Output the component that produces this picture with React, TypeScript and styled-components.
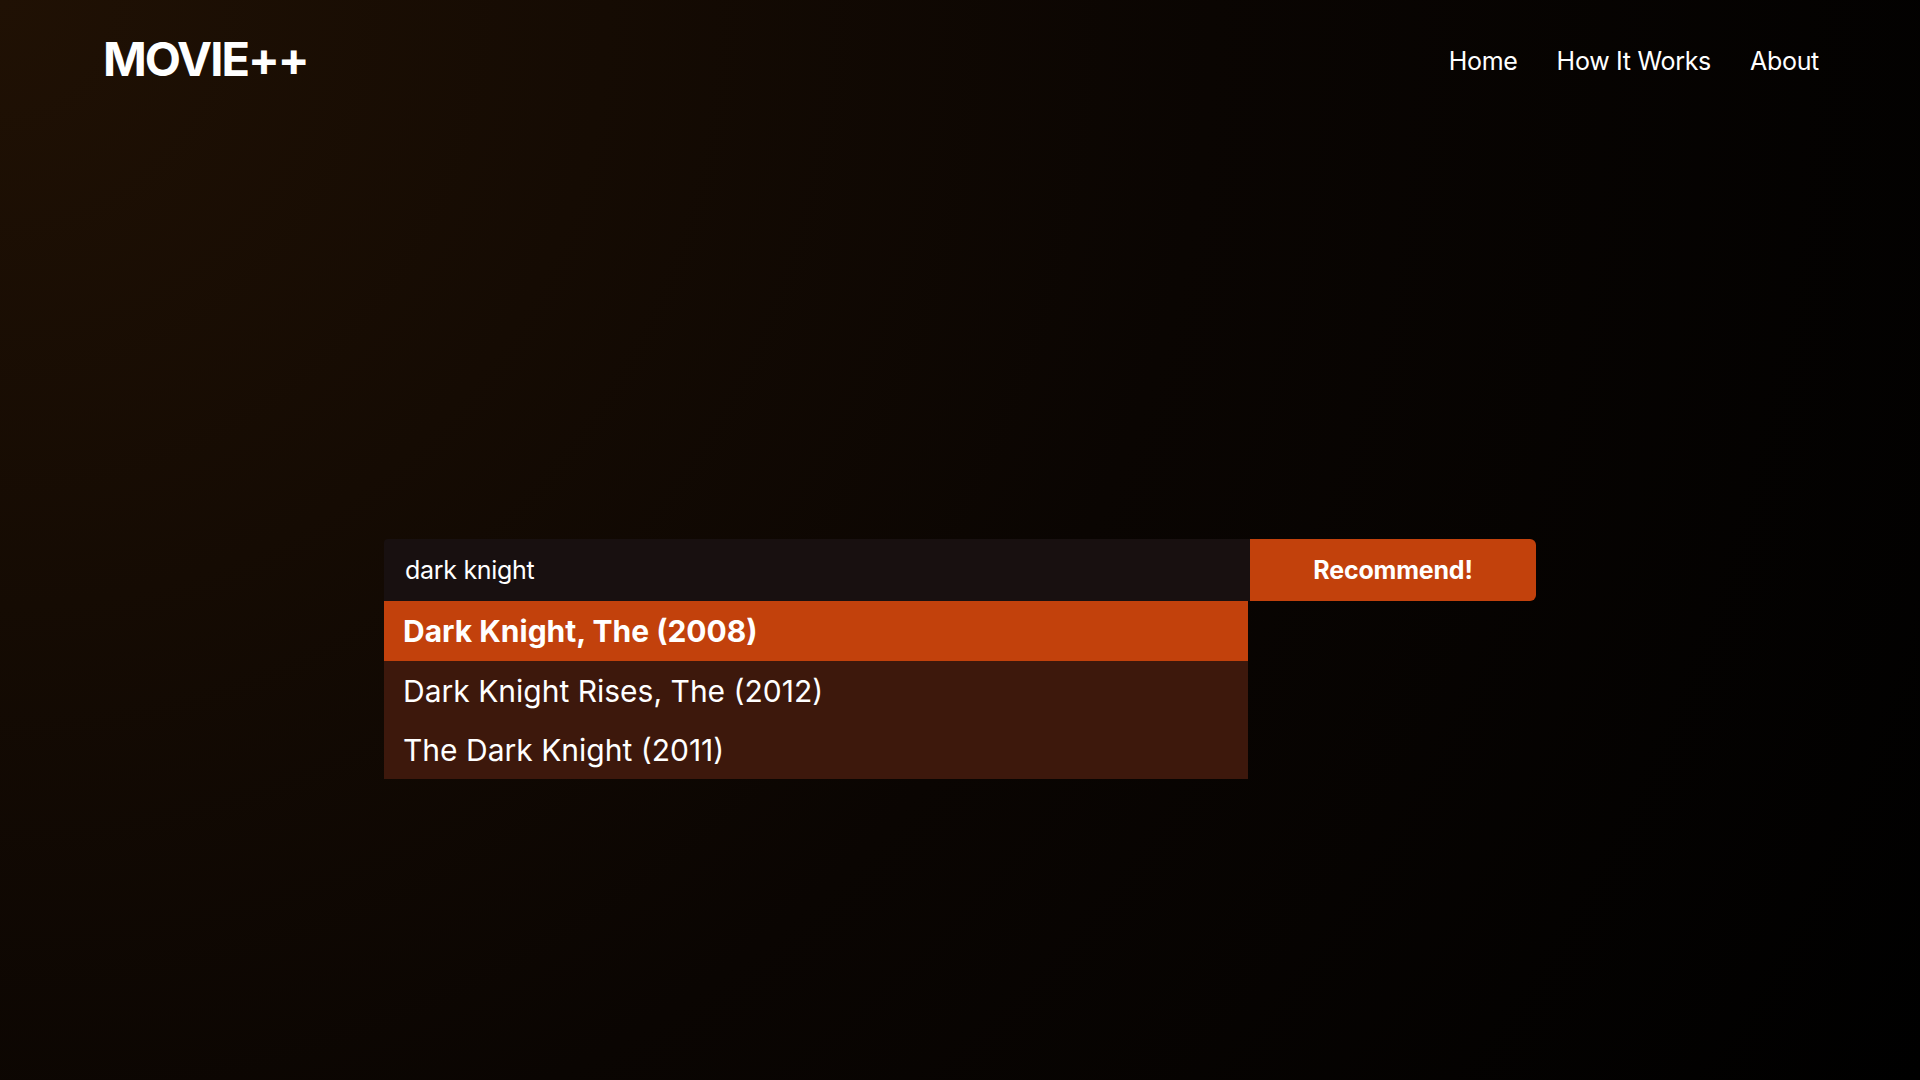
import styled, { createGlobalStyle } from "styled-components";

const GlobalStyle = createGlobalStyle`
  * {
    box-sizing: border-box;
  }
  body {
    margin: 0;
    background: #000;
    font-family: "Inter", "Noto Sans", sans-serif;
    color: #fff;
  }
`;

const results = [
  "Dark Knight, The (2008)",
  "Dark Knight Rises, The (2012)",
  "The Dark Knight (2011)",
];

const Page = styled.div`
  display: flex;
  flex-direction: column;
  min-height: 100vh;
  background: radial-gradient(circle at top left, #201104 0%, #0a0502 55%, #000 100%);
`;

const Header = styled.header`
  display: flex;
  align-items: center;
  justify-content: space-between;
  padding: 30px 101px 0 103px;
`;

const Logo = styled.a`
  font-size: 47px;
  font-weight: 700;
  letter-spacing: -2px;
  color: #fff;
  text-decoration: none;
  cursor: pointer;
`;

const Nav = styled.nav`
  display: flex;
  align-items: center;
  gap: 39px;
  padding-top: 4px;
`;

const NavLink = styled.a`
  font-size: 25px;
  font-weight: 400;
  color: #fff;
  text-decoration: none;
  letter-spacing: -0.3px;
  cursor: pointer;
`;

const Main = styled.main`
  display: flex;
  justify-content: center;
  padding-top: 452px;
`;

const SearchBar = styled.div`
  position: relative;
  display: flex;
  width: 1152px;
  height: 62px;
`;

const Input = styled.input`
  flex: 0 0 866px;
  height: 100%;
  padding: 0 21px;
  border: none;
  outline: none;
  border-radius: 4px 0 0 0;
  background: #181010;
  color: #fff;
  font-family: "Inter", "Noto Sans", sans-serif;
  font-size: 25px;
  letter-spacing: -0.3px;
`;

const Button = styled.button`
  flex: 1;
  height: 100%;
  border: none;
  border-radius: 0 6px 6px 0;
  background: #c2410c;
  color: #fff;
  font-family: "Inter", "Noto Sans", sans-serif;
  font-size: 25px;
  font-weight: 700;
  letter-spacing: -0.2px;
  cursor: pointer;
`;

const Dropdown = styled.ul`
  position: absolute;
  top: 62px;
  left: 0;
  width: 864px;
  margin: 0;
  padding: 0;
  list-style: none;
  background: #3d180c;
`;

const Option = styled.li<{ $active?: boolean }>`
  display: flex;
  align-items: center;
  height: ${(p) => (p.$active ? "60px" : "59px")};
  padding: 0 19px;
  font-size: 30px;
  font-weight: ${(p) => (p.$active ? 700 : 400)};
  background: ${(p) => (p.$active ? "#c2410c" : "transparent")};
  cursor: pointer;
`;

export default function App() {
  return (
    <>
      <GlobalStyle />
      <Page>
        <Header>
          <Logo>MOVIE++</Logo>
          <Nav>
            <NavLink>Home</NavLink>
            <NavLink>How It Works</NavLink>
            <NavLink>About</NavLink>
          </Nav>
        </Header>
        <Main>
          <SearchBar>
            <Input defaultValue="dark knight" />
            <Button>Recommend!</Button>
            <Dropdown>
              {results.map((r, i) => (
                <Option key={r} $active={i === 0}>
                  {r}
                </Option>
              ))}
            </Dropdown>
          </SearchBar>
        </Main>
      </Page>
    </>
  );
}
